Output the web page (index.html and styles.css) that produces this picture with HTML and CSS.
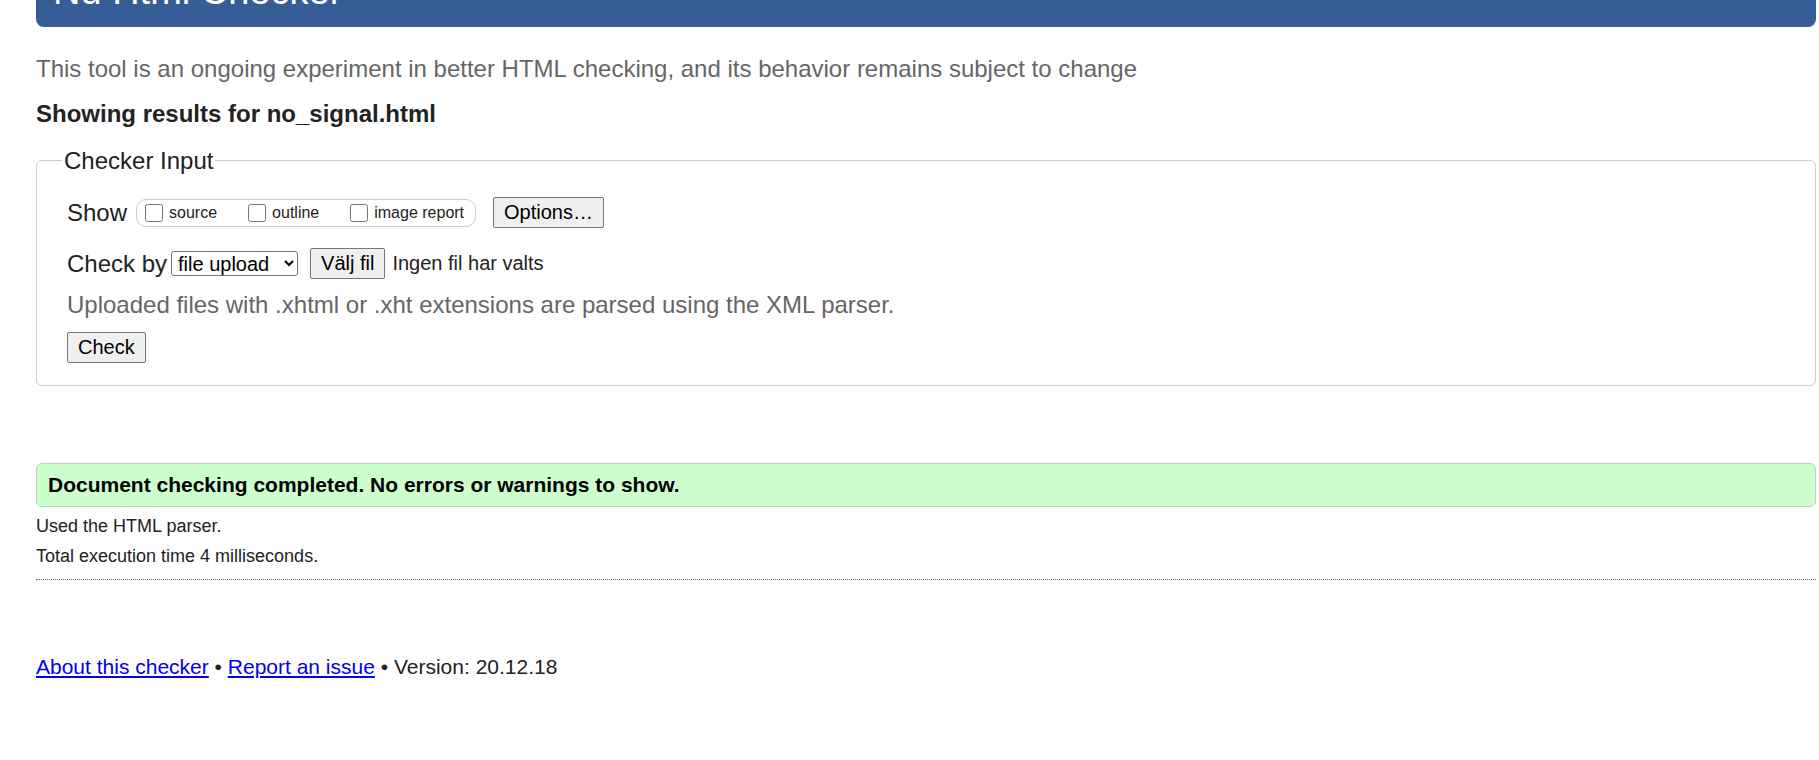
FILE: index.html
```html
<!DOCTYPE html>
<html lang="en">
<head>
<meta charset="utf-8">
<title>Nu Html Checker</title>
<link rel="stylesheet" href="styles.css">
</head>
<body>
<div class="page">
  <header class="masthead"><h1>Nu Html Checker</h1></header>
  <p class="tagline">This tool is an ongoing experiment in better HTML checking, and its behavior remains subject to change</p>
  <p class="showing">Showing results for no_signal.html</p>
  <form class="checker-form">
    <fieldset class="checker">
      <legend>Checker Input</legend>
      <div class="row row-show">
        <span class="lbl">Show</span>
        <div class="opts">
          <label class="opt"><input type="checkbox">source</label>
          <label class="opt"><input type="checkbox">outline</label>
          <label class="opt"><input type="checkbox">image report</label>
        </div>
        <button type="button" class="btn btn-options">Options…</button>
      </div>
      <div class="row row-by">
        <span class="lbl">Check by</span>
        <select class="by"><option>file upload</option></select>
        <button type="button" class="btn btn-file">Välj fil</button>
        <span class="nofile">Ingen fil har valts</span>
      </div>
      <p class="hint">Uploaded files with .xhtml or .xht extensions are parsed using the XML parser.</p>
      <div class="row row-submit">
        <button type="button" class="btn">Check</button>
      </div>
    </fieldset>
  </form>
  <p class="success">Document checking completed. No errors or warnings to show.</p>
  <p class="meta">Used the HTML parser.</p>
  <p class="meta">Total execution time 4 milliseconds.</p>
  <hr class="rule">
  <p class="footer"><a href="#">About this checker</a> • <a href="#">Report an issue</a> • Version: 20.12.18</p>
</div>
</body>
</html>
```
FILE: styles.css
```css
html, body {
  margin: 0;
  padding: 0;
  background: #fff;
}
body {
  font-family: "Liberation Sans", Arial, sans-serif;
  color: #222;
}
.page {
  padding: 0 3px 0 36px;
}
.masthead {
  margin-top: -45px;
  background: #365d95;
  border-radius: 0 0 8px 8px;
  padding: 13px 17px;
}
.masthead h1 {
  margin: 0;
  font-size: 38px;
  font-weight: normal;
  line-height: 46px;
  color: #fff;
}
.tagline {
  margin: 28px 0 0;
  font-size: 24px;
  line-height: 27px;
  color: #666;
}
.showing {
  margin: 18px 0 0;
  font-size: 24px;
  line-height: 27px;
  font-weight: bold;
  color: #222;
}
.checker-form {
  margin: 20px 0 0;
}
.checker {
  margin: 0;
  border: 1px solid #ccc;
  border-radius: 6px;
  padding: 0 30px 22px;
  min-width: 0;
}
.checker legend {
  margin-left: -5px;
  padding: 0 2px;
  font-size: 24px;
  line-height: 27px;
  color: #222;
}
.row {
  display: flex;
  align-items: center;
  height: 31px;
}
.row-show {
  margin-top: 23px;
}
.row-by {
  margin-top: 20px;
}
.row-submit {
  margin-top: 14px;
}
.lbl {
  font-size: 24px;
  line-height: 27px;
  color: #222;
}
.opts {
  display: flex;
  align-items: center;
  gap: 31px;
  height: 26px;
  margin-left: 9px;
  padding: 0 11px 0 8px;
  border: 1px solid #ccc;
  border-radius: 10px;
}
.opt {
  display: flex;
  align-items: center;
  gap: 6px;
  font-size: 16px;
  line-height: 18px;
  color: #222;
}
.opt input {
  margin: 0;
  width: 18px;
  height: 18px;
}
.btn {
  height: 31px;
  padding: 0 10px;
  border: 1px solid #767676;
  border-radius: 2px;
  background: #efefef;
  font-family: "Liberation Sans", Arial, sans-serif;
  font-size: 20px;
  color: #000;
}
.btn-options {
  margin-left: 17px;
}
.by {
  margin-left: 4px;
  width: 127px;
  height: 25px;
  padding: 0 2px;
  border: 1px solid #767676;
  border-radius: 3px;
  background: #fff;
  font-family: "Liberation Sans", Arial, sans-serif;
  font-size: 20px;
  color: #000;
}
.btn-file {
  margin-left: 12px;
}
.nofile {
  margin-left: 7px;
  font-size: 20px;
  color: #222;
}
.hint {
  margin: 12px 0 0;
  font-size: 24px;
  line-height: 27px;
  color: #666;
}
.success {
  margin: 77px 0 0;
  padding: 9px 11px;
  border: 1px solid #b9d3b9;
  border-radius: 6px;
  background: #ccffcc;
  font-size: 21px;
  line-height: 24px;
  font-weight: bold;
  color: #000;
}
.meta {
  margin: 9px 0 0;
  font-size: 18px;
  line-height: 21px;
  color: #222;
}
.rule {
  margin: 12px 0 0;
  height: 0;
  border: 0;
  border-top: 1px dotted #666;
}
.footer {
  margin: 75px 0 0;
  font-size: 21px;
  line-height: 24px;
  color: #222;
}
.footer a {
  color: #0000ee;
  text-decoration: underline;
}
```
